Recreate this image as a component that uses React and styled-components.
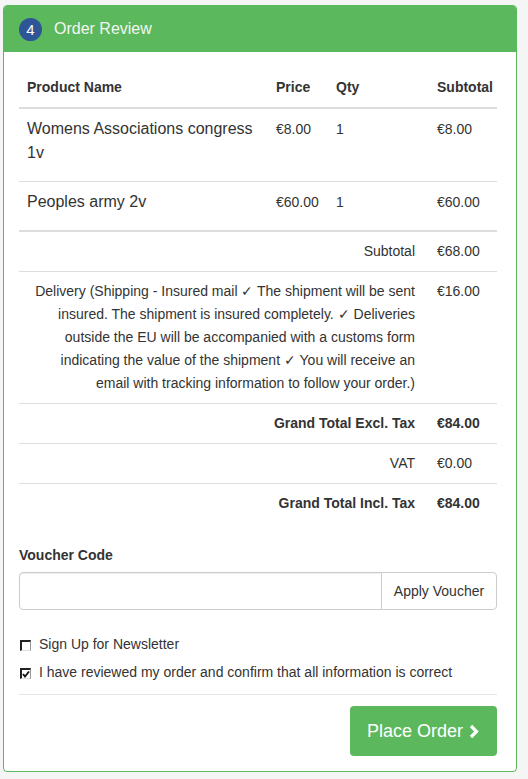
import React from 'react';
import styled, { createGlobalStyle } from 'styled-components';

const GlobalStyle = createGlobalStyle`
    body {
        margin: 0;
        background: #f5f5f5;
        font-family: "Liberation Sans", Arial, sans-serif;
        font-size: 14px;
        color: #333;
    }
    * {
        box-sizing: border-box;
    }
`;

const Page = styled.div`
    padding: 5px 11px 7px 3px;
`;

const Panel = styled.div`
    width: 514px;
    background: #fff;
    border: 1px solid #5cb85c;
    border-radius: 4px;
    overflow: hidden;
`;

const Heading = styled.div`
    display: flex;
    align-items: center;
    gap: 12px;
    height: 46px;
    padding: 0 15px;
    background: #5cb85c;
    color: #f3f5f3;
`;

const Step = styled.span`
    display: flex;
    align-items: center;
    justify-content: center;
    width: 23px;
    height: 23px;
    border-radius: 50%;
    background: #2e5596;
    color: #fff;
    font-size: 15px;
`;

const Title = styled.span`
    font-size: 16px;
`;

const Body = styled.div`
    padding: 15px 19px 15px 15px;
`;

const Table = styled.table`
    width: 100%;
    border-collapse: collapse;
    table-layout: fixed;
    margin-bottom: 22px;
`;

const Th = styled.th`
    text-align: left;
    font-weight: bold;
    line-height: 20px;
    padding: 10px 8px;
    border-bottom: 2px solid #ddd;
    white-space: nowrap;
`;

const ItemRow = styled.tr`
    td {
        border-bottom: ${(p) => (p.$last ? '2px' : '1px')} solid #ddd;
    }
`;

const Td = styled.td`
    vertical-align: top;
    padding: 8px 8px 16px;
    line-height: 24px;
    font-size: ${(p) => (p.$name ? '16px' : '14px')};
    white-space: ${(p) => (p.$name ? 'normal' : 'nowrap')};
`;

const TotalRow = styled.tr`
    td {
        border-bottom: ${(p) => (p.$last ? 'none' : '1px solid #ddd')};
        font-weight: ${(p) => (p.$bold ? 'bold' : 'normal')};
        line-height: 23px;
        vertical-align: top;
    }
`;

const TotalLabel = styled.td`
    text-align: right;
    padding: 8px 14px 8px 8px;
`;

const TotalValue = styled.td`
    padding: 8px;
    white-space: nowrap;
`;

const Label = styled.label`
    display: block;
    font-weight: bold;
    line-height: 20px;
    margin-bottom: 7px;
`;

const InputGroup = styled.div`
    display: flex;
    height: 38px;
`;

const Input = styled.input`
    flex: 1;
    min-width: 0;
    border: 1px solid #ccc;
    border-radius: 4px 0 0 4px;
    box-shadow: inset 0 1px 1px rgba(0, 0, 0, 0.075);
    padding: 6px 12px;
    font: inherit;
`;

const ApplyBTN = styled.button`
    width: 116px;
    margin-left: -1px;
    background: #fff;
    border: 1px solid #ccc;
    border-radius: 0 4px 4px 0;
    color: #333;
    font: inherit;
    font-size: 14px;
    padding: 0;
`;

const Checks = styled.div`
    display: flex;
    flex-direction: column;
    gap: 8px;
    margin-top: 24px;
`;

const CheckRow = styled.div`
    display: flex;
    align-items: center;
    gap: 8px;
    line-height: 20px;
`;

const Box = styled.span`
    display: flex;
    align-items: center;
    justify-content: center;
    width: 11px;
    height: 11px;
    margin: 3px 0 0 1px;
    border-style: solid;
    border-width: 2px 1px 1px 2px;
    border-color: #222 #999 #ddd #222;
    background: #fff;
`;

const Divider = styled.hr`
    border: none;
    border-top: 1px solid #e5e5e5;
    margin: 12px 0 11px;
`;

const Actions = styled.div`
    display: flex;
    justify-content: flex-end;
`;

const PlaceBTN = styled.button`
    display: flex;
    align-items: center;
    gap: 6px;
    width: 147px;
    height: 50px;
    padding: 0 0 0 17px;
    background: #5cb85c;
    border: none;
    border-radius: 4px;
    color: #fff;
    font-family: "Liberation Sans", Arial, sans-serif;
    font-size: 18px;
`;

const items = [
    { name: 'Womens Associations congress 1v', price: '€8.00', qty: 1, total: '€8.00' },
    { name: 'Peoples army 2v', price: '€60.00', qty: 1, total: '€60.00' }
];

const totals = [
    { label: 'Subtotal', value: '€68.00' },
    {
        label: 'Delivery (Shipping - Insured mail ✓ The shipment will be sent insured. The shipment is insured completely. ✓ Deliveries outside the EU will be accompanied with a customs form indicating the value of the shipment ✓ You will receive an email with tracking information to follow your order.)',
        value: '€16.00'
    },
    { label: 'Grand Total Excl. Tax', value: '€84.00', bold: true },
    { label: 'VAT', value: '€0.00' },
    { label: 'Grand Total Incl. Tax', value: '€84.00', bold: true }
];

function Checkbox({ checked }) {
    return (
        <Box>
            {checked && (
                <svg width="8" height="8" viewBox="0 0 8 8">
                    <polyline
                        points="1,4 3,6.5 7,1.5"
                        fill="none"
                        stroke="#111"
                        strokeWidth="1.8"
                    />
                </svg>
            )}
        </Box>
    );
}

export default function App() {
    return (
        <Page>
            <GlobalStyle />
            <Panel>
                <Heading>
                    <Step>4</Step>
                    <Title>Order Review</Title>
                </Heading>
                <Body>
                    <Table>
                        <colgroup>
                            <col style={{ width: 249 }} />
                            <col style={{ width: 60 }} />
                            <col style={{ width: 101 }} />
                            <col style={{ width: 68 }} />
                        </colgroup>
                        <thead>
                            <tr>
                                <Th>Product Name</Th>
                                <Th>Price</Th>
                                <Th>Qty</Th>
                                <Th>Subtotal</Th>
                            </tr>
                        </thead>
                        <tbody>
                            {items.map((item, i) => (
                                <ItemRow key={item.name} $last={i === items.length - 1}>
                                    <Td $name>{item.name}</Td>
                                    <Td>{item.price}</Td>
                                    <Td>{item.qty}</Td>
                                    <Td>{item.total}</Td>
                                </ItemRow>
                            ))}
                        </tbody>
                        <tfoot>
                            {totals.map((t, i) => (
                                <TotalRow
                                    key={t.label}
                                    $bold={t.bold}
                                    $last={i === totals.length - 1}
                                >
                                    <TotalLabel colSpan={3}>{t.label}</TotalLabel>
                                    <TotalValue>{t.value}</TotalValue>
                                </TotalRow>
                            ))}
                        </tfoot>
                    </Table>

                    <Label>Voucher Code</Label>
                    <InputGroup>
                        <Input type="text" />
                        <ApplyBTN>Apply Voucher</ApplyBTN>
                    </InputGroup>

                    <Checks>
                        <CheckRow>
                            <Checkbox />
                            Sign Up for Newsletter
                        </CheckRow>
                        <CheckRow>
                            <Checkbox checked />
                            I have reviewed my order and confirm that all information is correct
                        </CheckRow>
                    </Checks>

                    <Divider />

                    <Actions>
                        <PlaceBTN>
                            Place Order
                            <svg width="10" height="15" viewBox="0 0 10 15">
                                <polyline
                                    points="2,2 7.5,7.5 2,13"
                                    fill="none"
                                    stroke="#fff"
                                    strokeWidth="3.2"
                                />
                            </svg>
                        </PlaceBTN>
                    </Actions>
                </Body>
            </Panel>
        </Page>
    );
}
